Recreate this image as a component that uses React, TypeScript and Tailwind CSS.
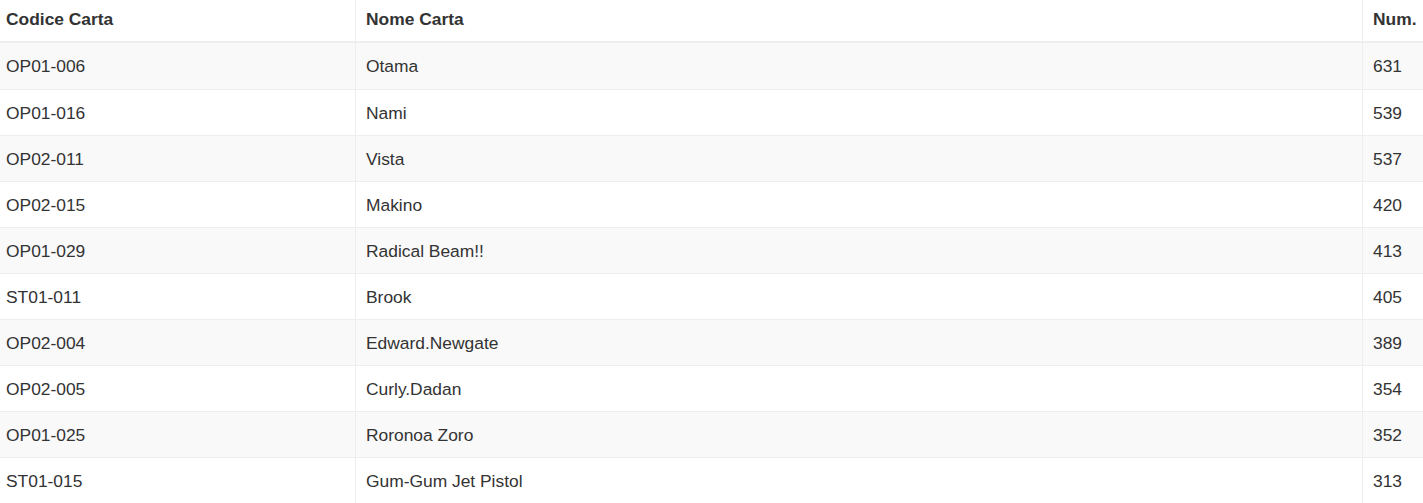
import React from "react";

const rows: [string, string, string][] = [
  ["OP01-006", "Otama", "631"],
  ["OP01-016", "Nami", "539"],
  ["OP02-011", "Vista", "537"],
  ["OP02-015", "Makino", "420"],
  ["OP01-029", "Radical Beam!!", "413"],
  ["ST01-011", "Brook", "405"],
  ["OP02-004", "Edward.Newgate", "389"],
  ["OP02-005", "Curly.Dadan", "354"],
  ["OP01-025", "Roronoa Zoro", "352"],
  ["ST01-015", "Gum-Gum Jet Pistol", "313"],
];

export default function App() {
  return (
    <div
      className="w-[1423px] h-[503px] overflow-hidden bg-white text-[#333333] text-[17.4px]"
      style={{ fontFamily: '"Liberation Sans", Arial, sans-serif' }}
    >
      <div className="flex h-[43px] border-b-2 border-[#eeeeee] font-bold">
        <div className="w-[356px] border-r border-[#eeeeee] pl-[6px] pb-[3px] flex items-center">Codice Carta</div>
        <div className="w-[1007px] border-r border-[#eeeeee] pl-[10px] pb-[3px] flex items-center">Nome Carta</div>
        <div className="flex-1 pl-[10px] pb-[3px] flex items-center">Num.</div>
      </div>
      {rows.map((r, i) => (
        <div
          key={r[0] + i}
          className={`flex h-[46px] ${i > 0 ? "border-t border-[#eeeeee]" : ""} ${i % 2 === 0 ? "bg-[#f9f9f9]" : "bg-white"}`}
        >
          <div className="w-[356px] border-r border-[#eeeeee] pl-[6px] pt-[1px] flex items-center">{r[0]}</div>
          <div className="w-[1007px] border-r border-[#eeeeee] pl-[10px] pt-[1px] flex items-center">{r[1]}</div>
          <div className="flex-1 pl-[10px] pt-[1px] flex items-center">{r[2]}</div>
        </div>
      ))}
    </div>
  );
}
